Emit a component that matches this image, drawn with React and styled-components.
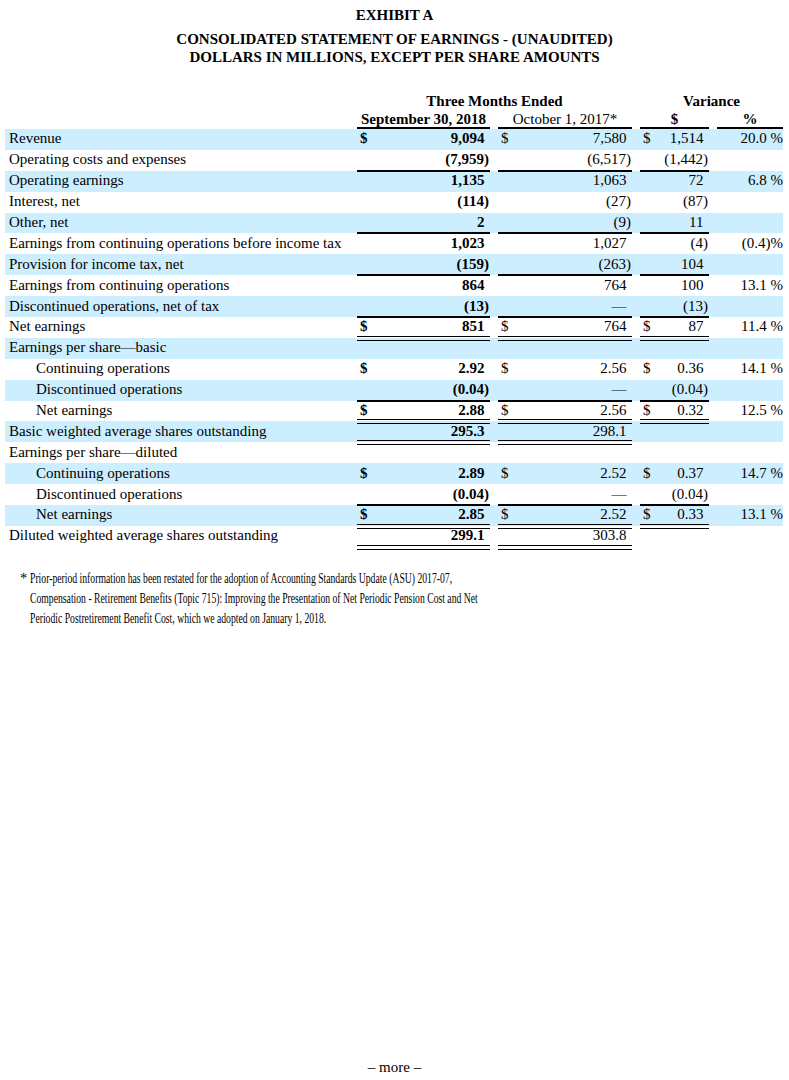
import React from 'react';
import styled, { createGlobalStyle, css } from 'styled-components';

const GlobalStyle = createGlobalStyle`
    body {
        margin: 0;
        background: #fff;
        color: #000;
        font-family: "Liberation Serif", "Times New Roman", serif;
    }
`;

const Page = styled.div`
    width: 789px;
    min-height: 1080px;
    display: flex;
    flex-direction: column;
    box-sizing: border-box;
    padding-top: 6px;
`;

const Heading = styled.div`
    display: flex;
    flex-direction: column;
    align-items: center;
    font-size: 15px;
    font-weight: 700;
    line-height: 18px;
    white-space: nowrap;
    margin-bottom: ${p => p.$after || 0}px;
`;

const Table = styled.div`
    margin-left: 5px;
    width: 778px;
    font-size: 15px;
`;

const COLS = '352px 133px 8px 134px 8px 69px 8px 66px';

const HeadRow = styled.div`
    display: grid;
    grid-template-columns: ${COLS};
    height: 18px;
    line-height: 16px;
    font-weight: 700;
`;

const HeadCell = styled.div`
    grid-column: ${p => p.$col};
    text-align: center;
    font-weight: ${p => (p.$light ? 400 : 700)};
    border-bottom: ${p => (p.$rule ? '2px solid #000' : 'none')};
    box-sizing: border-box;
`;

const Row = styled.div`
    display: grid;
    grid-template-columns: ${COLS};
    grid-template-rows: 100%;
    height: 20.9px;
    background: ${p => (p.$shade ? '#cceeff' : 'transparent')};
`;

const Label = styled.div`
    display: flex;
    align-items: center;
    padding: 0 0 1px ${p => (p.$indent ? 31 : 4)}px;
    white-space: nowrap;
`;

const singleRule = css`
    &::after {
        content: '';
        position: absolute;
        left: 0;
        right: 0;
        bottom: -1px;
        height: 2px;
        background: #000;
    }
`;

const doubleRule = css`
    &::after {
        content: '';
        position: absolute;
        left: 0;
        right: 0;
        bottom: -3px;
        height: 5px;
        box-sizing: border-box;
        border-top: 1.5px solid #000;
        border-bottom: 1.5px solid #000;
    }
`;

const Amount = styled.div`
    position: relative;
    display: flex;
    align-items: center;
    justify-content: space-between;
    padding: 0 1px 1px 3px;
    font-weight: ${p => (p.$bold ? 700 : 400)};
    ${p => (p.$line === 'double' ? doubleRule : p.$line === 'single' ? singleRule : '')}
`;

const Value = styled.span`
    padding-right: ${p => (p.$neg ? 0 : '0.3em')};
`;

const Pct = styled.div`
    display: flex;
    align-items: center;
    justify-content: flex-end;
    padding-bottom: 1px;
    white-space: pre;
`;

const Gap = styled.div``;

const Note = styled.div`
    display: flex;
    margin-top: 21px;
    padding-left: 20px;
    font-size: 14.5px;
    line-height: 20px;
`;

const Star = styled.span`
    width: 10px;
    flex: none;
`;

const NoteLines = styled.div`
    display: flex;
    flex-direction: column;
    align-items: flex-start;
`;

const NoteLine = styled.span`
    display: inline-block;
    white-space: nowrap;
    transform: scaleX(0.668);
    transform-origin: left;
`;

const More = styled.div`
    margin-top: auto;
    padding-bottom: 4px;
    text-align: center;
    font-size: 15px;
    line-height: 18px;
`;

const rows = [
    { label: 'Revenue', dollar: true, a: '9,094', b: '7,580', c: '1,514', d: '20.0 %' },
    { label: 'Operating costs and expenses', a: '(7,959)', b: '(6,517)', c: '(1,442)', line: 'single', lineC: true },
    { label: 'Operating earnings', a: '1,135', b: '1,063', c: '72', d: '6.8 %' },
    { label: 'Interest, net', a: '(114)', b: '(27)', c: '(87)' },
    { label: 'Other, net', a: '2', b: '(9)', c: '11', line: 'single', lineC: true },
    { label: 'Earnings from continuing operations before income tax', a: '1,023', b: '1,027', c: '(4)', d: '(0.4)%' },
    { label: 'Provision for income tax, net', a: '(159)', b: '(263)', c: '104', line: 'single', lineC: true },
    { label: 'Earnings from continuing operations', a: '864', b: '764', c: '100', d: '13.1 %' },
    { label: 'Discontinued operations, net of tax', a: '(13)', b: '—', c: '(13)', line: 'single', lineC: true },
    { label: 'Net earnings', dollar: true, a: '851', b: '764', c: '87', d: '11.4 %', line: 'double', lineC: true },
    { label: 'Earnings per share—basic' },
    { label: 'Continuing operations', indent: true, dollar: true, a: '2.92', b: '2.56', c: '0.36', d: '14.1 %' },
    { label: 'Discontinued operations', indent: true, a: '(0.04)', b: '—', c: '(0.04)', line: 'single', lineC: true },
    { label: 'Net earnings', indent: true, dollar: true, a: '2.88', b: '2.56', c: '0.32', d: '12.5 %', line: 'double', lineC: true },
    { label: 'Basic weighted average shares outstanding', a: '295.3', b: '298.1', line: 'double' },
    { label: 'Earnings per share—diluted' },
    { label: 'Continuing operations', indent: true, dollar: true, a: '2.89', b: '2.52', c: '0.37', d: '14.7 %' },
    { label: 'Discontinued operations', indent: true, a: '(0.04)', b: '—', c: '(0.04)', line: 'single', lineC: true },
    { label: 'Net earnings', indent: true, dollar: true, a: '2.85', b: '2.52', c: '0.33', d: '13.1 %', line: 'double', lineC: true },
    { label: 'Diluted weighted average shares outstanding', a: '299.1', b: '303.8', line: 'double' },
];

const AmountCell = ({ dollar, value, bold, line }) => (
    <Amount $bold={bold} $line={line}>
        <span>{dollar ? '$' : ''}</span>
        {value && <Value $neg={value.endsWith(')')}>{value}</Value>}
    </Amount>
);

export default function App() {
    return (
        <Page>
            <GlobalStyle />
            <Heading $after={6}>EXHIBIT A</Heading>
            <Heading $after={27}>
                <span>CONSOLIDATED STATEMENT OF EARNINGS - (UNAUDITED)</span>
                <span>DOLLARS IN MILLIONS, EXCEPT PER SHARE AMOUNTS</span>
            </Heading>

            <Table>
                <HeadRow>
                    <HeadCell $col="2 / 5">Three Months Ended</HeadCell>
                    <HeadCell $col="6 / 9">Variance</HeadCell>
                </HeadRow>
                <HeadRow>
                    <HeadCell $col="2" $rule>September 30, 2018</HeadCell>
                    <HeadCell $col="4" $rule $light>October 1, 2017*</HeadCell>
                    <HeadCell $col="6" $rule>$</HeadCell>
                    <HeadCell $col="8" $rule>%</HeadCell>
                </HeadRow>
                {rows.map((r, i) => (
                    <Row key={i} $shade={i % 2 === 0}>
                        <Label $indent={r.indent}>{r.label}</Label>
                        <AmountCell dollar={r.dollar} value={r.a} bold line={r.line} />
                        <Gap />
                        <AmountCell dollar={r.dollar} value={r.b} line={r.line} />
                        <Gap />
                        <AmountCell dollar={r.dollar} value={r.c} line={r.lineC ? r.line : null} />
                        <Gap />
                        <Pct>{r.d}</Pct>
                    </Row>
                ))}
            </Table>

            <Note>
                <Star>*</Star>
                <NoteLines>
                    <NoteLine>
                        Prior-period information has been restated for the adoption of Accounting Standards Update (ASU) 2017-07,
                    </NoteLine>
                    <NoteLine>
                        Compensation - Retirement Benefits (Topic 715): Improving the Presentation of Net Periodic Pension Cost and Net
                    </NoteLine>
                    <NoteLine>
                        Periodic Postretirement Benefit Cost, which we adopted on January 1, 2018.
                    </NoteLine>
                </NoteLines>
            </Note>

            <More>– more –</More>
        </Page>
    );
}
